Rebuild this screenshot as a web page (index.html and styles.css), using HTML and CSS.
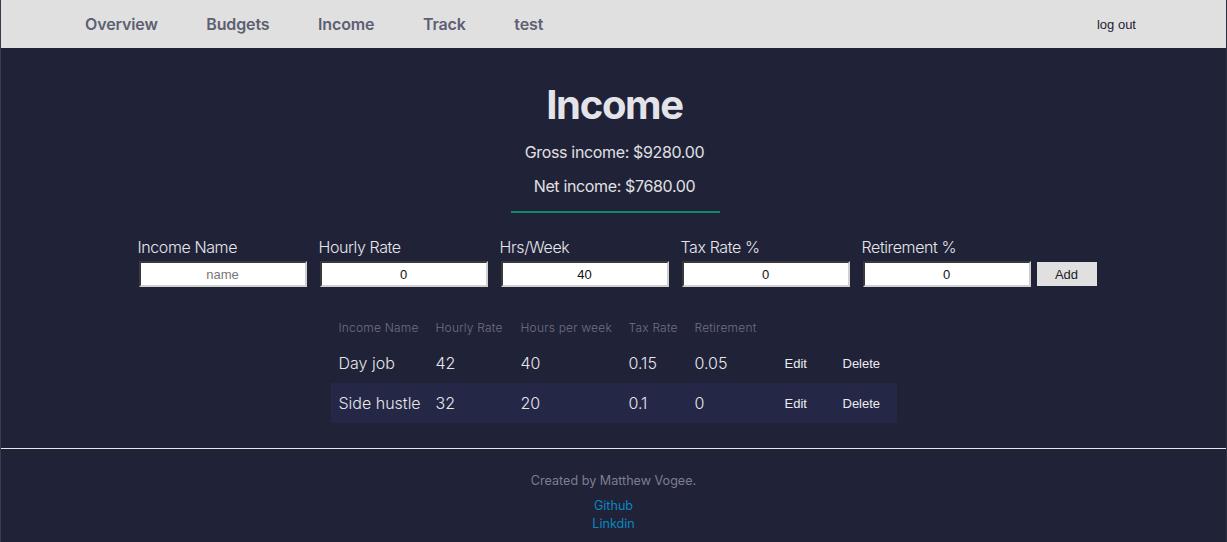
FILE: index.html
```html
<!DOCTYPE html>
<html>
<head>
<meta charset="utf-8">
<link rel="stylesheet" href="styles.css">
</head>
<body>
<header class="topbar">
  <nav class="nav">
    <a class="nav-link">Overview</a>
    <a class="nav-link">Budgets</a>
    <a class="nav-link">Income</a>
    <a class="nav-link">Track</a>
    <a class="nav-link">test</a>
  </nav>
  <a class="logout">log out</a>
</header>
<main class="main">
  <h1 class="title">Income</h1>
  <p class="summary">Gross income: $9280.00</p>
  <p class="summary">Net income: $7680.00</p>
  <div class="divider"></div>
  <form class="form">
    <label class="field"><span class="field-label">Income Name</span><input class="field-input" type="text" placeholder="name"></label>
    <label class="field"><span class="field-label">Hourly Rate</span><input class="field-input" type="text" value="0"></label>
    <label class="field"><span class="field-label">Hrs/Week</span><input class="field-input" type="text" value="40"></label>
    <label class="field"><span class="field-label">Tax Rate %</span><input class="field-input" type="text" value="0"></label>
    <label class="field"><span class="field-label">Retirement %</span><input class="field-input" type="text" value="0"></label>
    <button class="add-btn" type="button">Add</button>
  </form>
  <table class="table">
    <colgroup>
      <col class="c1"><col class="c2"><col class="c3"><col class="c4"><col class="c5"><col class="c6"><col class="c7">
    </colgroup>
    <thead>
      <tr class="head-row"><th>Income Name</th><th>Hourly Rate</th><th>Hours per week</th><th>Tax Rate</th><th>Retirement</th><th></th><th></th></tr>
    </thead>
    <tbody>
      <tr class="row"><td>Day job</td><td>42</td><td>40</td><td>0.15</td><td>0.05</td><td class="action">Edit</td><td class="action">Delete</td></tr>
      <tr class="row row-alt"><td>Side hustle</td><td>32</td><td>20</td><td>0.1</td><td>0</td><td class="action">Edit</td><td class="action">Delete</td></tr>
    </tbody>
  </table>
</main>
<footer class="footer">
  <p class="credit">Created by Matthew Vogee.</p>
  <a class="foot-link">Github</a>
  <a class="foot-link">Linkdin</a>
</footer>
</body>
</html>
```
FILE: styles.css
```css
* { box-sizing: border-box; }
html, body { margin: 0; padding: 0; }
body {
  background: #202238;
  font-family: Inter, "Noto Sans", sans-serif;
  color: #e2e2e6;
  height: 542px;
  overflow: hidden;
  border-left: 1px solid #3a3c4e;
  border-right: 1px solid #2c2e42;
}
.topbar {
  height: 48px;
  background: #e0e0e0;
  display: flex;
  align-items: center;
  justify-content: space-between;
  padding: 0 90px 0 84px;
}
.nav { display: flex; gap: 48.5px; }
.nav-link {
  font-weight: 600;
  font-size: 16px;
  color: #5d5f72;
  letter-spacing: -0.12px;
}
.logout {
  font-family: "Liberation Sans", Arial, sans-serif;
  font-size: 13px;
  color: #1f2030;
}
.main {
  display: flex;
  flex-direction: column;
  align-items: center;
  border-bottom: 1px solid #e6e6ea;
  height: 401px;
}
.main > * { flex-shrink: 0; }
.title {
  margin: 33px 0 0 2px;
  font-size: 40px;
  line-height: 48px;
  font-weight: 700;
  color: #e4e4e8;
  letter-spacing: -1.3px;
}
.summary {
  margin: 0 0 0 2px;
  font-size: 16px;
  line-height: 20px;
  color: #e0e0e4;
  letter-spacing: -0.35px;
}
.title + .summary { margin-top: 13px; }
.summary + .summary { margin-top: 14px; }
.divider {
  width: 209px;
  height: 2px;
  background: #0f8a68;
  margin-top: 15px;
  margin-left: 4px;
}
.form {
  display: flex;
  align-items: flex-end;
  gap: 13px;
  margin-top: 24px;
  margin-left: 8px;
}
.field { display: flex; flex-direction: column; }
.field-label {
  font-size: 16px;
  font-weight: 300;
  line-height: 20px;
  color: #e6e6ea;
  margin-left: -1px;
  margin-bottom: 4px;
  letter-spacing: -0.4px;
}
.field-input {
  width: 168px;
  height: 26px;
  border: 2px inset #a0a0a0;
  border-color: #8d8d8d #d0d0d0 #d0d0d0 #8d8d8d;
  background: #fff;
  text-align: center;
  font-family: "Liberation Sans", Arial, sans-serif;
  font-size: 13px;
  color: #111;
  padding: 0 4px;
}
.field-input::placeholder { color: #777; }
.add-btn {
  width: 60px;
  height: 24px;
  margin-bottom: 1px;
  border: none;
  background: #e0e0e0;
  font-family: "Liberation Sans", Arial, sans-serif;
  font-size: 13px;
  color: #222;
  margin-left: -7px;
}
.table {
  margin-top: 26px;
  width: 566px;
  table-layout: fixed;
  border-collapse: collapse;
}
.c1 { width: 97px; } .c2 { width: 85px; } .c3 { width: 108px; } .c4 { width: 66px; }
.c5 { width: 90px; } .c6 { width: 58px; } .c7 { width: 62px; }
.table th, .table td {
  text-align: left;
  padding: 0 0 0 8px;
  white-space: nowrap;
}
.head-row th {
  font-size: 12px;
  font-weight: 300;
  color: #6e7086;
  height: 30px;
  padding-bottom: 2px;
  letter-spacing: 0.2px;
}
.row td {
  height: 40px;
  font-size: 16px;
  font-weight: 300;
  color: #e6e6ea;
}
.row td.action {
  font-family: "Liberation Sans", Arial, sans-serif;
  font-size: 13px;
  color: #ececf0;
}
.row-alt { background: #242746; }
.footer {
  display: flex;
  flex-direction: column;
  align-items: center;
  padding-top: 24px;
}
.credit {
  margin: 0 0 8px;
  font-size: 12.6px;
  line-height: 16px;
  color: #7c7e93;
}
.foot-link {
  font-size: 12.6px;
  line-height: 18px;
  color: #0a86c2;
}
```
